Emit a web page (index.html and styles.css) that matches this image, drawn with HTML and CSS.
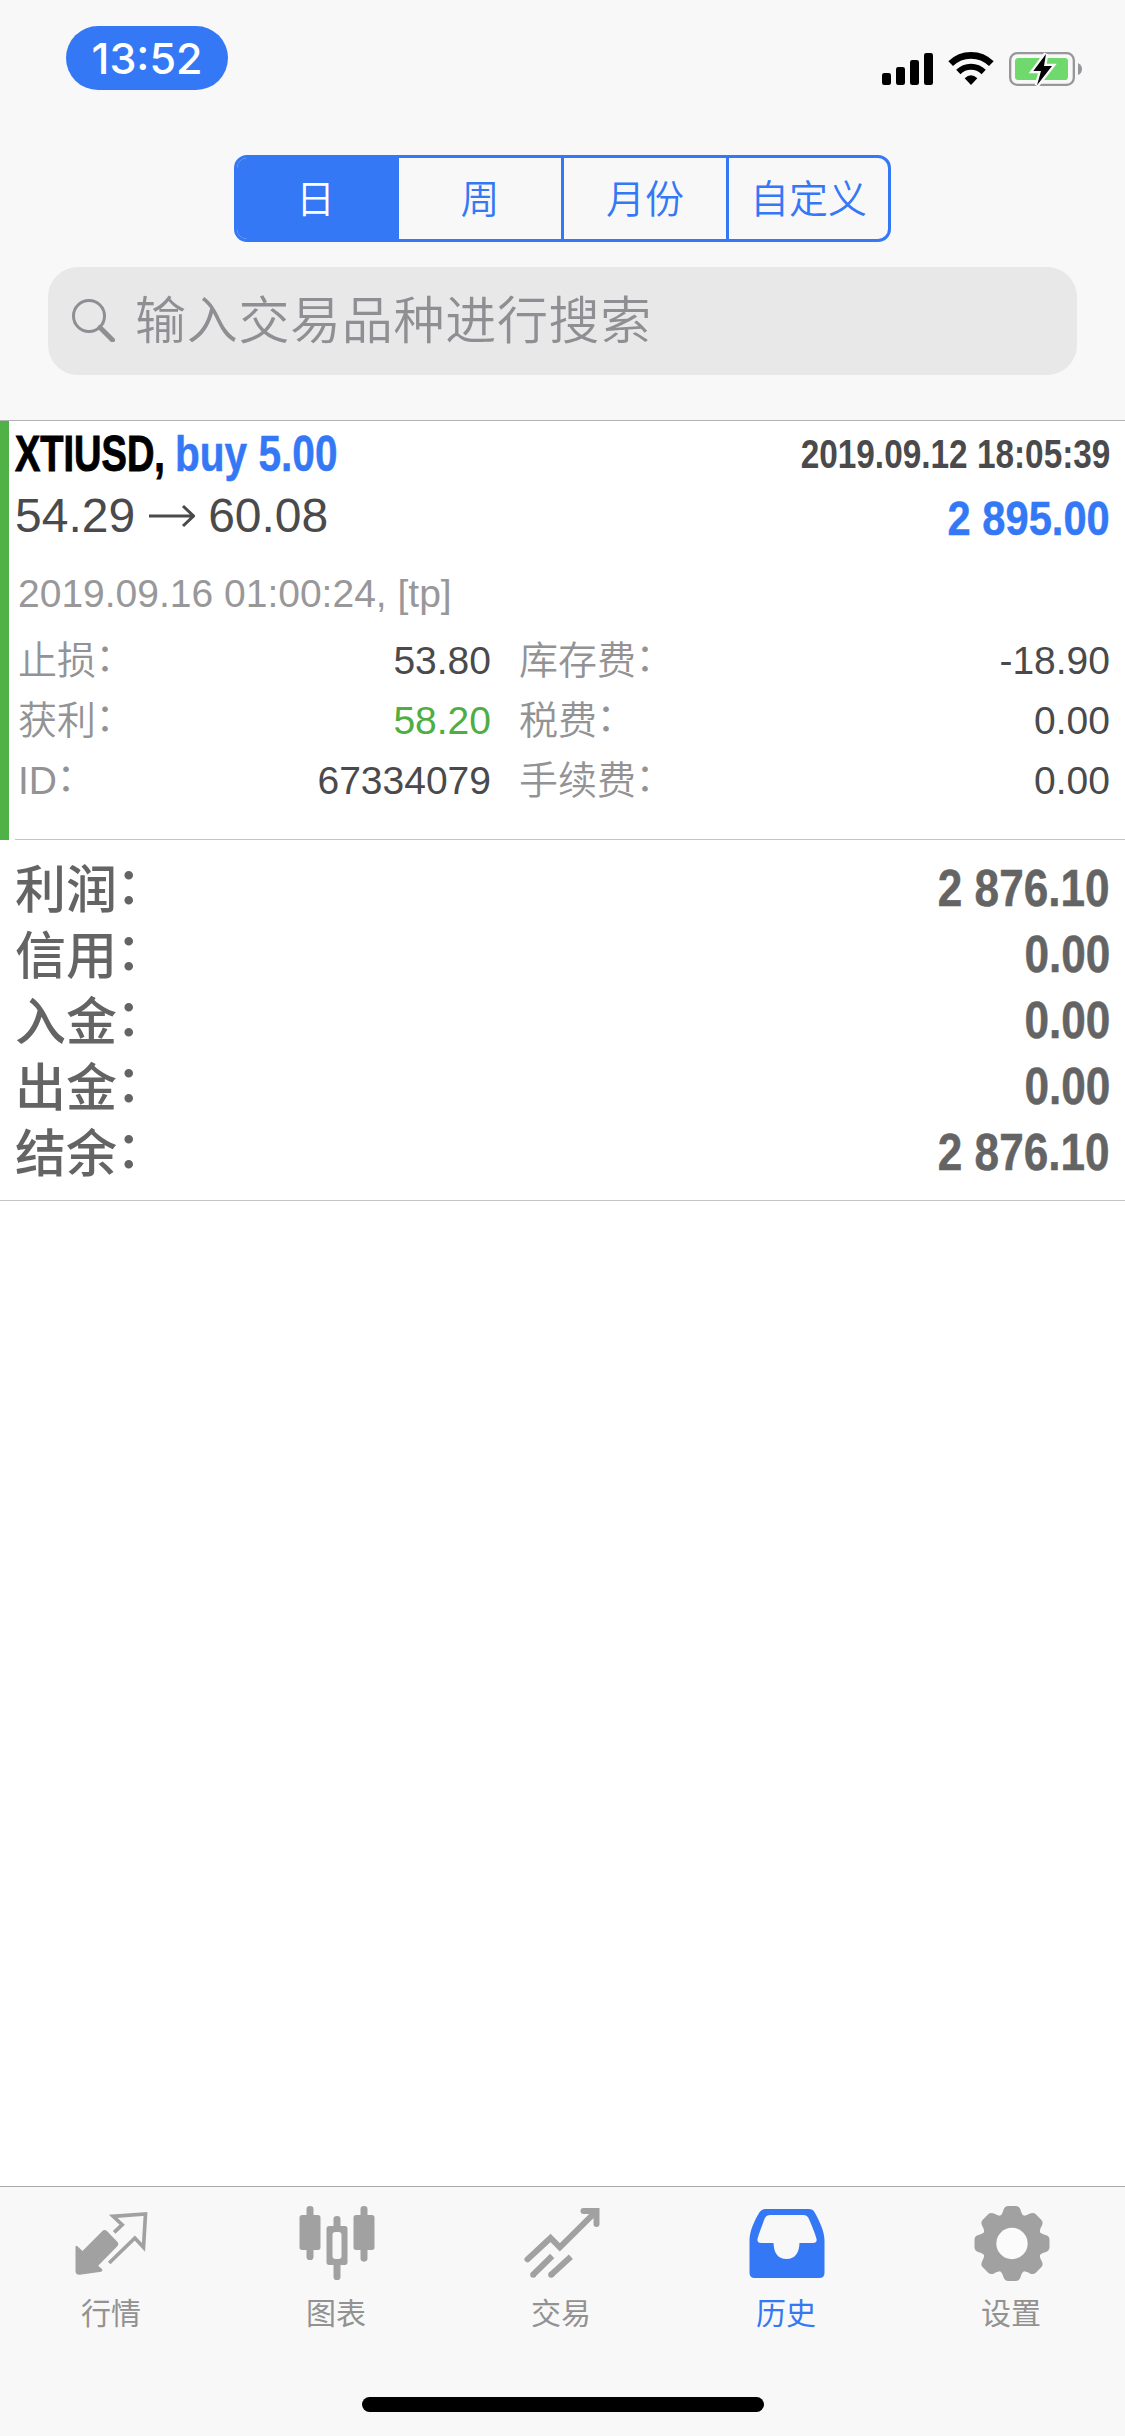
FILE: index.html
```html
<!DOCTYPE html>
<html lang="zh-CN">
<head>
<meta charset="utf-8">
<title>历史</title>
<link rel="stylesheet" href="styles.css">
</head>
<body>
<header class="top">
  <div class="status">
    <div class="time"><span>13:52</span></div>
    <svg class="status-icons" viewBox="60 60 612 114">
      <rect x="66" y="129" width="27" height="36" rx="7"/>
      <rect x="108" y="111" width="27" height="54" rx="7"/>
      <rect x="150" y="90" width="27" height="75" rx="7"/>
      <rect x="192" y="69" width="27" height="96" rx="7"/>
      <g fill="none" stroke="#000">
        <path d="M272 101A87 87 0 0 1 394 101" stroke-width="20"/>
        <path d="M295 126A54 54 0 0 1 371 126" stroke-width="18"/>
      </g>
      <path d="M333 165L314 145Q333 126 352 145Z"/>
      <rect x="450.500" y="69.500" width="191" height="95" rx="21" fill="none" stroke="#97979b" stroke-width="7"/>
      <rect x="465" y="84" width="159" height="66" rx="10" fill="#70d96e"/>
      <path d="M654 99Q666 105 666 117Q666 130 654 135Z" fill="#97979b"/>
      <path d="M558 72L520 123H543L531 166L576 108H552Z" stroke="#f8f8f8" stroke-width="14" paint-order="stroke"/>
    </svg>
  </div>
  <div class="segments">
    <div class="segment active">日</div>
    <div class="segment">周</div>
    <div class="segment">月份</div>
    <div class="segment">自定义</div>
  </div>
  <div class="search">
    <svg class="search-icon" viewBox="0 0 44 44"><circle cx="18" cy="18" r="15.500"/><path class="handle" d="M29 29.500L41.500 42"/></svg>
    <span>输入交易品种进行搜索</span>
  </div>
</header>
<main>
  <section class="deal">
    <div class="deal-body">
      <div class="line line-title">
        <div class="title"><span class="symbol">XTIUSD,</span><span class="side">buy 5.00</span></div>
        <span class="open-time">2019.09.12 18:05:39</span>
      </div>
      <div class="line line-price">
        <div class="prices"><span>54.29</span><svg class="arrow" viewBox="0 0 46 24"><path d="M0 12H44M34 2L44.500 12L34 22"/></svg><span>60.08</span></div>
        <span class="profit">2 895.00</span>
      </div>
      <div class="close-time">2019.09.16 01:00:24, [tp]</div>
      <div class="details">
        <span class="key">止损<i>：</i></span><span class="val">53.80</span><span class="key">库存费<i>：</i></span><span class="val">-18.90</span>
        <span class="key">获利<i>：</i></span><span class="val hit">58.20</span><span class="key">税费<i>：</i></span><span class="val">0.00</span>
        <span class="key">ID<i>：</i></span><span class="val">67334079</span><span class="key">手续费<i>：</i></span><span class="val">0.00</span>
      </div>
    </div>
  </section>
  <section class="summary">
    <div class="sum-row"><span>利润<i>：</i></span><b>2 876.10</b></div>
    <div class="sum-row"><span>信用<i>：</i></span><b>0.00</b></div>
    <div class="sum-row"><span>入金<i>：</i></span><b>0.00</b></div>
    <div class="sum-row"><span>出金<i>：</i></span><b>0.00</b></div>
    <div class="sum-row"><span>结余<i>：</i></span><b>2 876.10</b></div>
  </section>
</main>
<footer class="bottom">
  <nav class="tabs">
    <div class="tab">
      <svg viewBox="217.500 102 240 234">
        <path fill="currentColor" d="M225 230Q226 225 230 228L246 243L305 184Q312 176 320 184L349 214Q358 222 349 230L293 287L305 298Q308 303 302 305L238 314Q225 315 225 303Z"/>
        <path fill="none" stroke="currentColor" stroke-width="11" d="M341 187L365 164L338 139L435 132L429 232L403 204L326 279"/>
      </svg>
      <span>行情</span>
    </div>
    <div class="tab">
      <svg viewBox="892.500 102 240 234">
        <g fill="currentColor">
          <rect x="918" y="108" width="21" height="162" rx="10"/><rect x="897" y="135" width="63" height="105" rx="8"/>
          <rect x="1080" y="108" width="21" height="167" rx="10"/><rect x="1059" y="135" width="63" height="105" rx="8"/>
          <rect x="999" y="138" width="21" height="192" rx="10"/><rect x="978" y="168" width="63" height="117" rx="8"/>
        </g>
        <rect x="996" y="186" width="27" height="81" rx="9" fill="#f8f8f8"/>
      </svg>
      <span>图表</span>
    </div>
    <div class="tab">
      <svg viewBox="367.500 102 240 234">
        <g fill="none" stroke="currentColor" stroke-width="18" stroke-linecap="round">
          <path d="M381 268L450 204L478 232L586 125"/><path d="M549 123H588V162"/>
          <path stroke-linecap="butt" d="M398 314L455 258M452 314L511 260"/>
          <path d="M398 314h.1M452 314h.1"/>
        </g>
      </svg>
      <span>交易</span>
    </div>
    <div class="tab current">
      <svg viewBox="67.500 102 240 234">
        <path fill="currentColor" fill-rule="evenodd" d="M120 117H250Q262 117 267 127C282 153 297 185 297 211V308Q297 324 281 324H88Q72 324 72 308V211C72 185 86 153 102 127Q108 117 120 117ZM134 135Q123 135 118 145C110 165 101 188 96 206Q94 219 107 219H144C145 247 156 267 183 267C210 267 221 247 222 219H262Q276 219 273 206C267 185 258 164 250 146Q245 135 234 135Z"/>
      </svg>
      <span>历史</span>
    </div>
    <div class="tab">
      <svg viewBox="742.500 102 240 234">
        <g fill="currentColor">
          <circle cx="859.500" cy="220.500" r="90"/>
          <path id="tooth" d="M815 143C828 138 831 129 834 119Q838 108 848 108H871Q881 108 885 119C888 129 891 138 904 143V170H815Z"/>
          <use href="#tooth" transform="rotate(45 859.500 220.500)"/>
          <use href="#tooth" transform="rotate(90 859.500 220.500)"/>
          <use href="#tooth" transform="rotate(135 859.500 220.500)"/>
          <use href="#tooth" transform="rotate(180 859.500 220.500)"/>
          <use href="#tooth" transform="rotate(225 859.500 220.500)"/>
          <use href="#tooth" transform="rotate(270 859.500 220.500)"/>
          <use href="#tooth" transform="rotate(315 859.500 220.500)"/>
        </g>
        <circle cx="859.500" cy="220.500" r="47" fill="#fbfbfb"/>
      </svg>
      <span>设置</span>
    </div>
  </nav>
  <div class="home-bar"></div>
</footer>
</body>
</html>
```
FILE: styles.css
```css
* { box-sizing: border-box; }

body {
  margin: 0;
  width: 1125px;
  height: 2436px;
  display: flex;
  flex-direction: column;
  background: #fff;
  color: #4a4a4c;
  font-family: "Liberation Sans", "Noto Sans CJK SC", sans-serif;
  overflow: hidden;
}

/* Full-width colons sit centred against the characters */
i { font-style: normal; line-height: 0; vertical-align: 0.08em; margin-left: -0.02em; }

/* Header */
.top {
  height: 421px;
  background: #f8f8f8;
  border-bottom: 1px solid #b2b2b2;
  display: flex;
  flex-direction: column;
  align-items: center;
}
.status {
  width: 100%;
  height: 155px;
  padding: 26px 41px 0 66px;
  display: flex;
  justify-content: space-between;
}
.time {
  width: 162px;
  height: 64px;
  border-radius: 32px;
  background: #3478f6;
  color: #fff;
  font: 550 43px/64px Inter, sans-serif;
  text-align: center;
}
.status-icons { width: 204px; height: 38px; margin-top: 24px; }

.segments {
  width: 657px;
  height: 87px;
  flex: none;
  display: grid;
  grid-template-columns: 159px 165px 165px 1fr;
  border: 3px solid #3478f6;
  border-radius: 13px;
  overflow: hidden;
}
.segment {
  font-size: 39px;
  line-height: 76px;
  text-align: center;
  color: #3478f6;
  font-family: "Noto Sans CJK SC", sans-serif;
  font-weight: 350;
}
.segment + .segment { border-left: 3px solid #3478f6; }
.segment.active { background: #3478f6; color: #fff; padding-right: 2px; }

.search {
  width: 1029px;
  height: 108px;
  margin-top: 25px;
  padding: 0 0 8px 23px;
  border-radius: 30px;
  background: #e8e8e9;
  color: #8e8e93;
  display: flex;
  align-items: center;
  gap: 20px;
  font: 350 51px/1 "Noto Sans CJK SC", sans-serif;
  letter-spacing: 0.7px;
}
.search-icon { width: 44px; height: 44px; margin-top: 6px; fill: none; stroke: #8e8e93; stroke-width: 3; }
.search-icon .handle { stroke-width: 5; stroke-linecap: round; }

/* Closed deal */
.deal { height: 419px; border-left: 9px solid #50b146; padding-left: 6px; }
.deal-body { height: 419px; border-bottom: 1px solid #c4c4c6; padding: 0 15px 0 0; }
.line { display: flex; justify-content: space-between; white-space: nowrap; }
.line-title { height: 62px; line-height: 67px; font-weight: 700; }
.title { display: flex; font-size: 50px; }
.symbol { width: 160px; color: #000; transform: scaleX(0.76); transform-origin: 0 0; -webkit-text-stroke: 1px; }
.side { color: #3478f6; transform: scaleX(0.812); transform-origin: 0 0; -webkit-text-stroke: 0.5px; }
.open-time { font-size: 40px; transform: scaleX(0.834); transform-origin: 100% 0; }
.line-price { height: 66px; line-height: 70px; font-size: 48px; }
.prices { display: flex; align-items: center; gap: 13px; }
.arrow { width: 46px; height: 24px; margin-left: 1px; fill: none; stroke: currentColor; stroke-width: 3; }
.profit { color: #3478f6; font-weight: 700; font-size: 49px; transform: scaleX(0.85); transform-origin: 100% 0; -webkit-text-stroke: 0.5px; }
.close-time { height: 61px; margin: 14px 0 0 3px; font-size: 39px; line-height: 61px; color: #98989a; }
.details {
  margin: 7px 0 0 3px;
  display: grid;
  grid-template-columns: 180px 293px 210px 1fr;
  grid-auto-rows: 60px;
  font-size: 39px;
  line-height: 60px;
}
.key { color: #939395; font-weight: 350; white-space: nowrap; }
.key:nth-child(4n + 3) { padding-left: 28px; }
.val { text-align: right; }
.hit { color: #4cae43; }

/* Totals */
.summary { height: 361px; padding: 15px 15px 0; border-bottom: 1px solid #c4c4c6; }
.sum-row { height: 66px; line-height: 67px; display: flex; justify-content: space-between; color: #646464; font-size: 51px; }
.sum-row span { font-family: "Noto Sans CJK SC", sans-serif; font-weight: 500; line-height: 62px; }
.sum-row b { transform: scaleX(0.865); transform-origin: 100% 0; -webkit-text-stroke: 0.5px; }

/* Tab bar */
.bottom {
  height: 250px;
  margin-top: auto;
  border-top: 1px solid #a9a9ab;
  background: #f8f8f8;
  display: flex;
  flex-direction: column;
  align-items: center;
}
.tabs { width: 100%; height: 210px; flex: none; display: grid; grid-template-columns: repeat(5, 1fr); }
.tab { display: flex; flex-direction: column; align-items: center; padding: 17px 3px 0 0; color: #a1a1a1; }
.tab svg { width: 80px; height: 78px; margin-left: 3px; }
.tab span { margin-top: 12px; font: 400 30px/34px "Noto Sans CJK SC", sans-serif; color: #929292; }
.tab.current, .tab.current span { color: #3478f6; }
.home-bar { width: 402px; height: 15px; border-radius: 8px; background: #000; }
```
